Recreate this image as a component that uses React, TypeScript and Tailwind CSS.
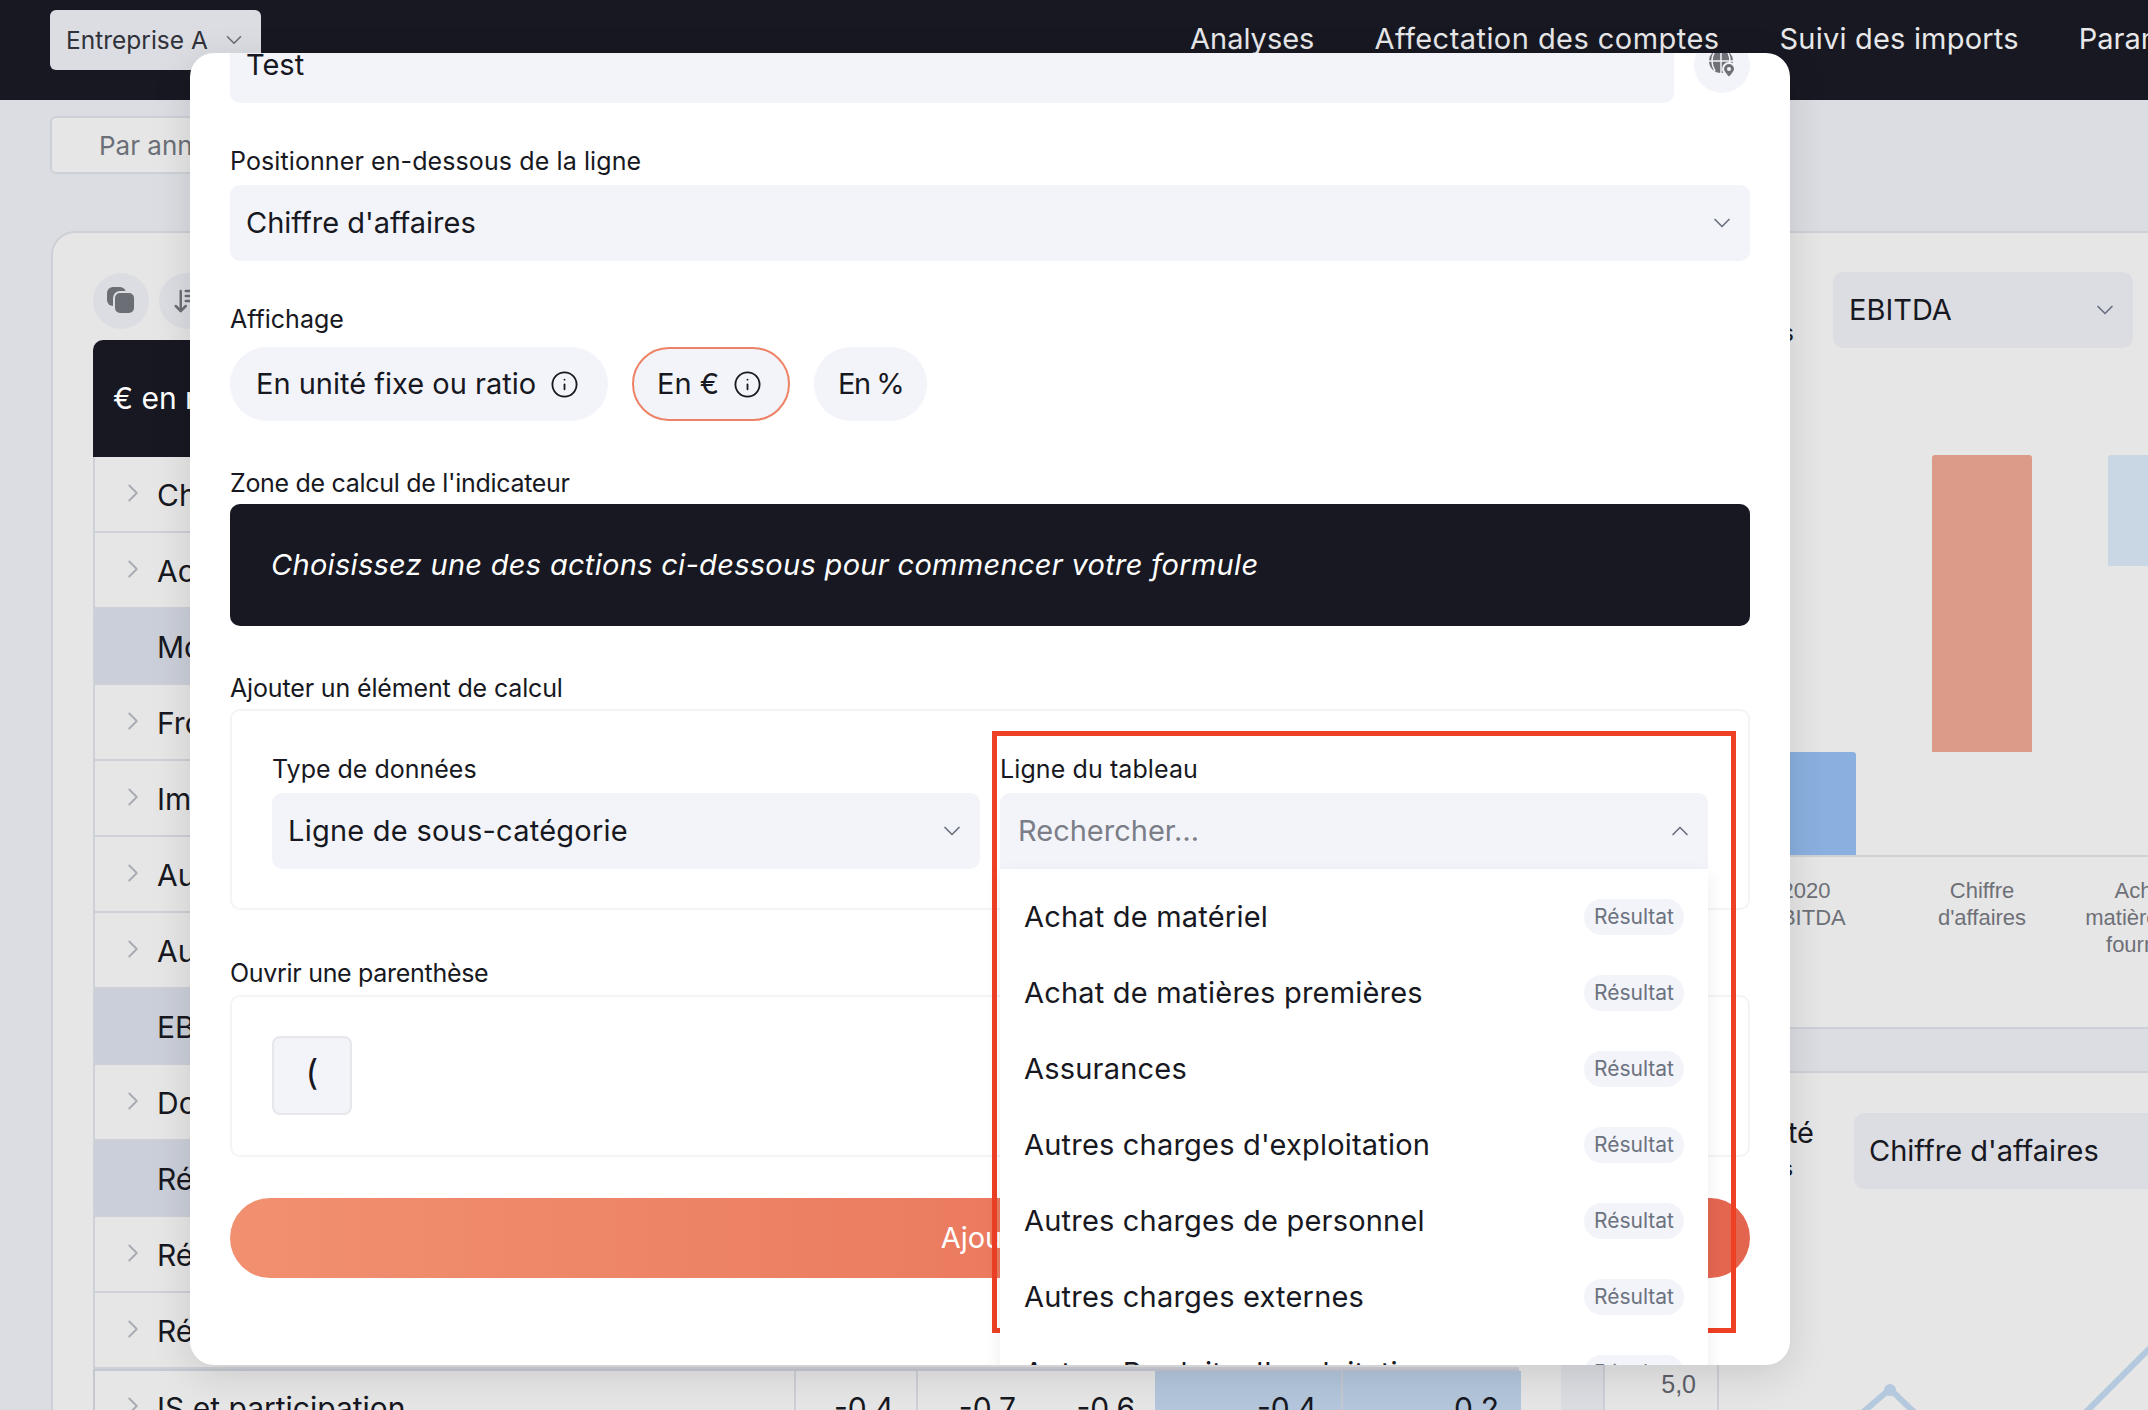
import { ArrowDownWideNarrow, ChevronDown, ChevronRight, ChevronUp, Info } from "lucide-react";

const tableRows = [
  { label: "Chiffre d'affaires" },
  { label: "Achats consommés" },
  { label: "Montant de marge", total: true },
  { label: "Froid et énergie" },
  { label: "Impôts et taxes" },
  { label: "Autres charges" },
  { label: "Autres produits" },
  { label: "EBITDA", total: true },
  { label: "Dotations aux amortissements" },
  { label: "Résultat d'exploitation", total: true },
  { label: "Résultat financier" },
  { label: "Résultat exceptionnel" },
];

const lines = [
  "Achat de matériel",
  "Achat de matières premières",
  "Assurances",
  "Autres charges d'exploitation",
  "Autres charges de personnel",
  "Autres charges externes",
  "Autres Produits d'exploitation",
];

function Label({ children, className = "" }: { children: React.ReactNode; className?: string }) {
  return <div className={`h-[36px] text-[25px] leading-[36px] text-[#171821] ${className}`}>{children}</div>;
}

function Select({ children, className = "" }: { children: React.ReactNode; className?: string }) {
  return (
    <div className={`flex h-[76px] items-center justify-between rounded-[10px] bg-[#f3f4f9] pl-[16px] pr-[14px] text-[29px] text-[#171821] ${className}`}>
      <span>{children}</span>
      <ChevronDown size={28} strokeWidth={1.5} className="text-[#6b7280]" />
    </div>
  );
}

function Pill({ children, info, active, className = "" }: { children: React.ReactNode; info?: boolean; active?: boolean; className?: string }) {
  return (
    <div
      className={`flex h-[74px] items-center gap-[14px] rounded-full bg-[#f3f4f9] text-[29px] text-[#171821] ${
        active ? "border-2 border-[#ee8267]" : ""
      } ${className}`}
    >
      {children}
      {info && <Info size={29} strokeWidth={1.5} />}
    </div>
  );
}

function GlobeIcon() {
  return (
    <svg width="30" height="42" viewBox="0 0 30 42" className="-mt-[6px]">
      <circle cx="14" cy="20" r="12" fill="#6f7178" />
      <path d="M14 8v24M2 20h24M8 10c-4 6-4 14 0 20M20 10c4 6 4 14 0 20" stroke="#f3f4f9" strokeWidth="1.5" fill="none" />
      <path d="M22 37c-4-4-6-6.5-6-9a6 6 0 0 1 12 0c0 2.5-2 5-6 9z" fill="#6f7178" stroke="#f3f4f9" strokeWidth="2" />
      <circle cx="22" cy="28" r="2" fill="#f3f4f9" />
    </svg>
  );
}

function CopyIcon() {
  return (
    <svg width="30" height="28" viewBox="0 0 30 28">
      <rect x="1" y="0" width="19" height="19" rx="6" fill="#6c6e76" />
      <rect x="8" y="5" width="21" height="22" rx="6" fill="#6c6e76" stroke="#dcdde2" strokeWidth="2" />
    </svg>
  );
}

function RowChevron() {
  return (
    <span className="w-[30px] shrink-0">
      <ChevronRight size={30} strokeWidth={1.5} className="-ml-[6px] -mt-[5px] text-[#a8abb3]" />
    </span>
  );
}

function TableRow({ label, total }: { label: string; total?: boolean }) {
  return (
    <div className={`flex h-[76px] items-center border-b-2 border-l-2 border-[#cdd0d6] pl-[29px] pt-[2px] text-[30px] text-[#171821] ${total ? "bg-[#cbcfd9]" : ""}`}>
      {total ? <span className="w-[30px] shrink-0" /> : <RowChevron />}
      <span className="ml-[3px]">{label}</span>
    </div>
  );
}

export default function App() {
  return (
    <div className="relative h-[1410px] w-[2148px] overflow-hidden bg-[#dcdde2] font-[family-name:Inter,sans-serif]">
      <header className="flex h-[100px] items-start whitespace-nowrap bg-[#171821] pl-[50px] text-[29px] text-[#e8e8ea]">
        <div className="mt-[10px] flex h-[60px] w-[211px] shrink-0 items-center gap-[13px] rounded-[6px] bg-[#dcdde2] pl-[16px] text-[24.5px] text-[#30323a]">
          Entreprise A
          <ChevronDown size={26} strokeWidth={1.5} className="text-[#6b6d75]" />
        </div>
        <nav className="ml-[929px] mt-[17px] flex shrink-0 gap-[60px]">
          <span>Analyses</span>
          <span className="tracking-[0.45px]">Affectation des comptes</span>
          <span className="tracking-[0.2px]">Suivi des imports</span>
          <span>Paramètres</span>
        </nav>
      </header>

      <div className="ml-[50px] mt-[16px] flex h-[58px] w-[400px] items-center rounded-[6px] border-2 border-[#cdd0d6] bg-[#e6e6e6] pl-[47px] text-[26px] text-[#6b6f78]">
        Par année
      </div>

      <main className="mt-[57px] flex w-[2300px] items-start pl-[51px]">
        <section className="h-[1300px] w-[1510px] shrink-0 rounded-tl-[24px] border-l-2 border-t-2 border-[#cdd0d6] bg-[#e6e6e6] pl-[40px] pr-[42px] pt-[40px]">
          <div className="flex gap-[10px]">
            <div className="flex h-[56px] w-[56px] items-center justify-center rounded-full bg-[#dcdde2]">
              <CopyIcon />
            </div>
            <div className="flex h-[56px] w-[56px] items-center justify-center rounded-full bg-[#dcdde2]">
              <ArrowDownWideNarrow size={30} className="text-[#6c6e76]" />
            </div>
          </div>
          <div className="mt-[11px] flex h-[117px] items-center rounded-tl-[10px] bg-[#171821] pl-[20px] text-[30px] text-white">€ en milliers</div>
          {tableRows.map((row) => (
            <TableRow key={row.label} label={row.label} total={row.total} />
          ))}
          <div className="grid h-[76px] grid-cols-[699px_122px_122px_117px_186px_180px] border-l-2 border-t-2 border-[#c6c8d1] text-[30px] text-[#171821]">
            <div className="flex items-center pl-[29px]">
              <RowChevron />
              <span className="ml-[3px]">IS et participation</span>
            </div>
            <div className="flex items-center justify-end border-l-2 border-[#cdd0d6] pr-[22px]">-0,4</div>
            <div className="flex items-center justify-end border-l-2 border-[#cdd0d6] pr-[22px]">-0,7</div>
            <div className="flex items-center justify-end pr-[20px]">-0,6</div>
            <div className="flex items-center justify-end bg-[#b3c6db] pr-[24px]">-0,4</div>
            <div className="flex items-center justify-end border-l-2 border-[#c3c9d3] bg-[#b3c6db] pr-[22px]">0,2</div>
          </div>
        </section>

        <div className="ml-[42px] flex w-[700px] shrink-0 flex-col gap-[42px]">
          <section className="h-[798px] rounded-[24px] border-2 border-[#cdd0d6] bg-[#e6e6e6]">
            <div className="mt-[39px] flex h-[76px] items-center">
              <div className="w-[189px] self-end text-right text-[24px] leading-[30px] text-[#171821]">Résultats</div>
              <div className="ml-[39px] flex h-[76px] w-[300px] items-center justify-between rounded-[10px] bg-[#dcdde2] pl-[16px] pr-[14px] text-[29px] text-[#171821]">
                EBITDA
                <ChevronDown size={28} strokeWidth={1.5} className="text-[#6b7280]" />
              </div>
            </div>
            <div className="ml-[113px] mt-[107px] flex h-[400px] items-end">
              <div className="flex h-full w-[176px] shrink-0 flex-col items-center justify-end">
                <div className="h-[103px] w-[100px] rounded-t-[3px] bg-[#8ab0e0]" />
              </div>
              <div className="flex h-full w-[176px] shrink-0 flex-col items-center justify-end pb-[103px]">
                <div className="h-[297px] w-[100px] rounded-t-[3px] bg-[#dc9a89]" />
              </div>
              <div className="flex h-full w-[176px] shrink-0 flex-col items-center justify-end pb-[289px]">
                <div className="h-[111px] w-[100px] rounded-t-[3px] bg-[#c9d7e5]" />
              </div>
            </div>
            <div className="ml-[113px] flex border-t-2 border-[#cfd1d6] pt-[20px] font-[family-name:Liberation_Sans,sans-serif] text-[22px] leading-[27px] text-[#6e7078]">
              <div className="w-[176px] shrink-0 text-center">2020<br />EBITDA</div>
              <div className="w-[176px] shrink-0 text-center">Chiffre<br />d'affaires</div>
              <div className="w-[176px] shrink-0 text-center">Achat de<br />matières 1ères<br />fournitures</div>
            </div>
          </section>

          <section className="h-[400px] rounded-tl-[24px] border-l-2 border-t-2 border-[#cdd0d6] bg-[#e6e6e6]">
            <div className="mt-[40px] flex h-[76px] items-start">
              <div className="w-[209px] text-right text-[#171821]">
                <div className="text-[29px] leading-[40px]">Saisonnalité</div>
                <div className="pr-[21px] text-[22px] leading-[30px]">En milliers</div>
              </div>
              <div className="ml-[40px] flex h-[76px] w-[400px] items-center rounded-[10px] bg-[#dcdde2] pl-[15px] text-[29px] text-[#171821]">Chiffre d'affaires</div>
            </div>
            <div className="mt-[11px] flex h-[220px]">
              <div className="flex w-[114px] shrink-0 items-end justify-end border-r-2 border-[#cdd0d6] pb-[20px] pr-[21px] font-[family-name:Liberation_Sans,sans-serif] text-[25px] leading-[32px] text-[#5d5f67]">
                5,0
              </div>
              <svg width="432" height="220" viewBox="0 0 432 220" className="shrink-0">
                <polyline points="143,213 171,189 196,213" fill="none" stroke="#b4c8de" strokeWidth="6" />
                <circle cx="171" cy="190" r="6" fill="#b4c8de" />
                <polyline points="366,213 432,147" fill="none" stroke="#b4c8de" strokeWidth="6" />
              </svg>
            </div>
          </section>
        </div>
      </main>

      {/* modal, scrolled down a bit */}
      <div className="absolute left-[190px] top-[53px] h-[1312px] w-[1600px] overflow-hidden rounded-[24px] bg-white shadow-[0_10px_40px_rgba(0,0,0,0.12)]">
        <div className="-mt-[26px] px-[40px]">
          <div className="flex items-center gap-[20px]">
            <div className="flex h-[76px] flex-1 items-center rounded-[10px] bg-[#f3f4f9] px-[16px] text-[29px] text-[#171821]">Test</div>
            <div className="flex h-[56px] w-[56px] items-center justify-center rounded-full bg-[#f3f4f9]">
              <GlobeIcon />
            </div>
          </div>

          <Label className="mt-[40px] mb-[6px] tracking-[0.1px]">Positionner en-dessous de la ligne</Label>
          <Select>Chiffre d'affaires</Select>

          <Label className="mt-[40px] mb-[10px]">Affichage</Label>
          <div className="flex gap-[24px]">
            <Pill info className="pl-[26px] pr-[29px]">En unité fixe ou ratio</Pill>
            <Pill info active className="pl-[23px] pr-[26px]">En €</Pill>
            <Pill className="w-[113px] justify-center tracking-[-1.5px]">En %</Pill>
          </div>

          <Label className="mt-[44px] mb-[3px] tracking-[-0.3px]">Zone de calcul de l'indicateur</Label>
          <div className="flex h-[122px] items-center rounded-[10px] bg-[#171821] pl-[41px] text-[29px] italic tracking-[0.3px] text-white">
            Choisissez une des actions ci-dessous pour commencer votre formule
          </div>

          <Label className="mt-[44px] mb-[3px] tracking-[-0.15px]">Ajouter un élément de calcul</Label>
          <div className="h-[201px] rounded-[10px] border-2 border-[#f3f4f6] px-[40px] pt-[40px]">
            <div className="grid grid-cols-[708px_708px] gap-[20px]">
              <div>
                <Label className="mb-[6px]">Type de données</Label>
                <Select className="tracking-[0.24px]">Ligne de sous-catégorie</Select>
              </div>
              <div className="relative z-10">
                <Label className="mb-[6px] tracking-[0.1px]">Ligne du tableau</Label>
                <div className="flex h-[76px] items-center justify-between rounded-t-[10px] bg-[#f3f4f9] pl-[18px] pr-[14px] text-[29px] text-[#7b7e87]">
                  Rechercher…
                  <ChevronUp size={28} strokeWidth={1.5} className="text-[#6b7280]" />
                </div>
                <div className="absolute left-0 right-0 top-full bg-white pt-[10px] shadow-[0_6px_16px_rgba(0,0,0,0.08)]">
                  {lines.map((line) => (
                    <div key={line} className="flex h-[76px] items-center justify-between pl-[24px] pr-[24px] text-[29px] tracking-[0.2px] text-[#171821]">
                      {line}
                      <span className="flex h-[36px] w-[100px] items-center justify-center rounded-full bg-[#f3f4f9] text-[21px] tracking-normal text-[#6b7280]">Résultat</span>
                    </div>
                  ))}
                </div>
              </div>
            </div>
          </div>

          <Label className="mt-[45px] mb-[4px] tracking-[-0.3px]">Ouvrir une parenthèse</Label>
          <div className="h-[162px] rounded-[10px] border-2 border-[#f3f4f6] px-[40px] pt-[39px]">
            <div className="flex h-[79px] w-[80px] items-center justify-center rounded-[8px] border-2 border-[#e5e7eb] bg-[#f3f4f9] pb-[6px] text-[35px] text-[#171821]">(</div>
          </div>

          <div className="mt-[41px] flex h-[80px] items-center justify-center rounded-full bg-gradient-to-r from-[#f19070] to-[#e4654f] text-[29px] text-white">Ajouter</div>
        </div>
      </div>

      {/* annotation */}
      <div className="pointer-events-none absolute left-[992px] top-[731px] h-[602px] w-[744px] border-[5px] border-[#ee4024]" />
    </div>
  );
}
